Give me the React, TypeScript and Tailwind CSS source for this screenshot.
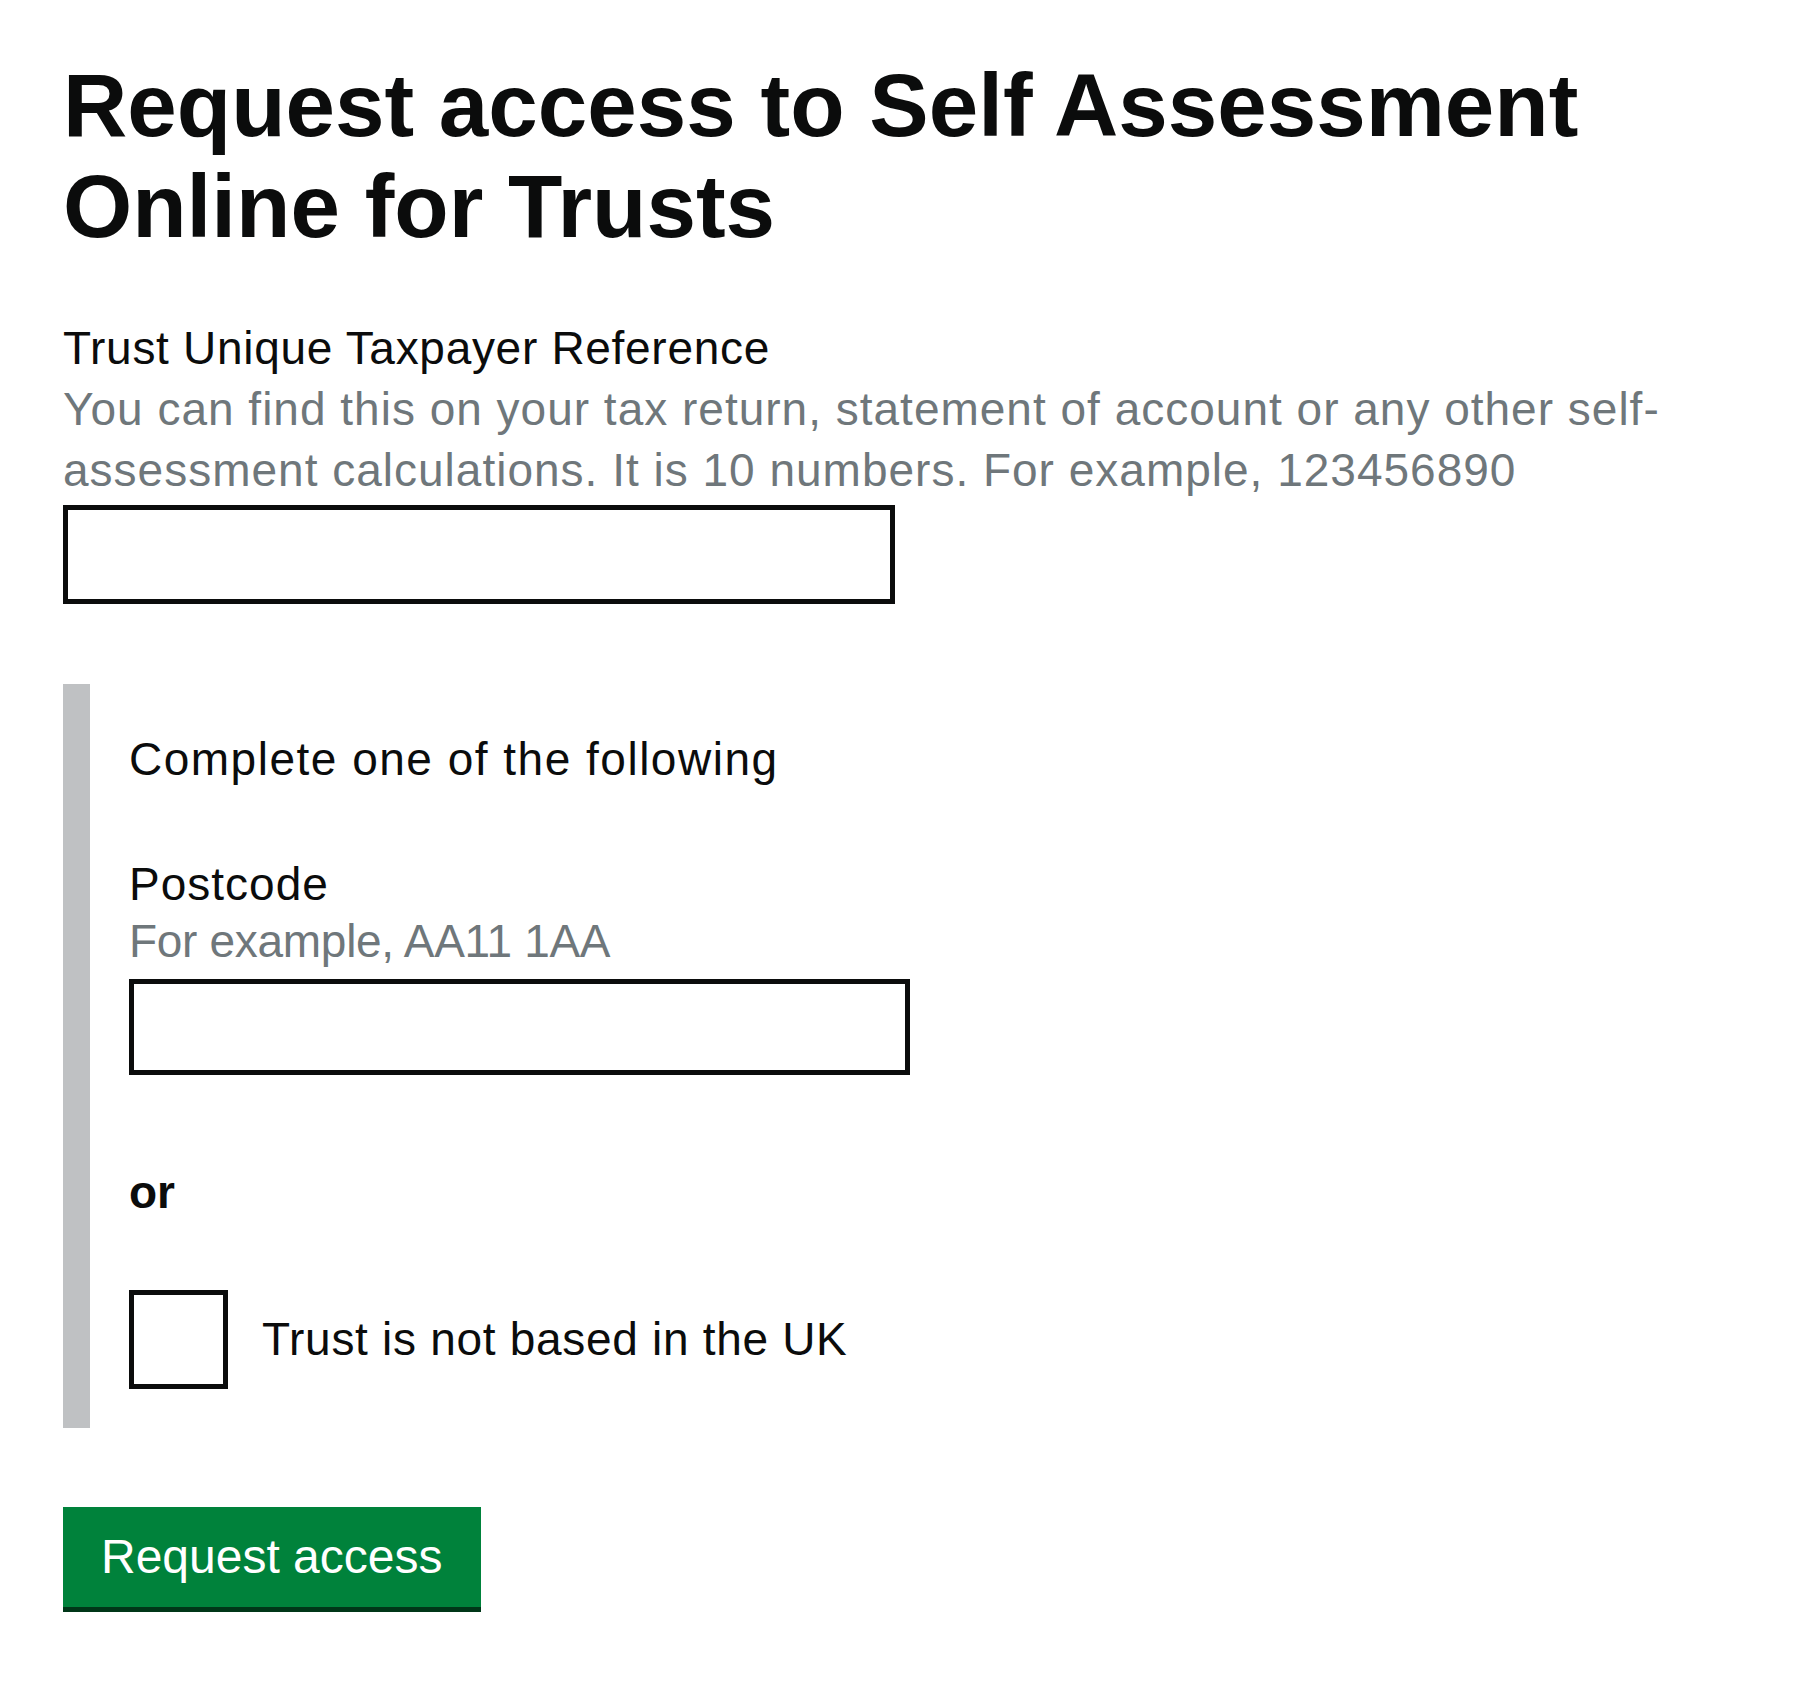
import React from "react"

const font = { fontFamily: '"Liberation Sans", Arial, sans-serif' }

export default function App() {
  return (
    <div className="min-h-screen w-full bg-white text-[#0b0c0c]" style={font}>
      <main className="pl-[63px] pr-[40px] pt-[55px] pb-[80px]">
        <h1 className="text-[89px] leading-[101px] font-bold">
          Request access to Self Assessment
          <br />
          Online for Trusts
        </h1>

        <form className="mt-[61px] tracking-[1px]" onSubmit={(e) => e.preventDefault()}>
          <label htmlFor="utr" className="block text-[46px] leading-[61px] tracking-[0.7px]">
            Trust Unique Taxpayer Reference
          </label>
          <span className="block text-[46px] leading-[61px] text-[#6f777b]">
            You can find this on your tax return, statement of account or any other self-
            <br />
            assessment calculations. It is 10 numbers. For example, 123456890
          </span>
          <input
            id="utr"
            type="text"
            className="mt-[4px] block w-[832px] h-[99px] border-[5px] border-[#0b0c0c] bg-white px-4 text-[46px] outline-none"
          />

          <div className="mt-[80px] border-l-[27px] border-[#bfc1c3] pl-[39px] pt-[45px] pb-[39px]">
            <p className="text-[46px] leading-[61px] tracking-[1.5px]">Complete one of the following</p>

            <label htmlFor="postcode" className="mt-[65px] block text-[46px] leading-[58px]">
              Postcode
            </label>
            <span className="block text-[46px] leading-[56px] text-[#6f777b] tracking-[-0.3px]">
              For example, AA11 1AA
            </span>
            <input
              id="postcode"
              type="text"
              className="mt-[10px] block w-[781px] h-[96px] border-[5px] border-[#0b0c0c] bg-white px-4 text-[46px] outline-none"
            />

            <p className="mt-[87px] text-[46px] leading-[61px] font-bold tracking-normal">or</p>

            <label className="mt-[67px] flex items-center gap-[34px] text-[46px] leading-[61px] tracking-[0.7px]">
              <input
                type="checkbox"
                className="appearance-none w-[99px] h-[99px] border-[5px] border-[#0b0c0c] bg-white shrink-0"
              />
              <span>Trust is not based in the UK</span>
            </label>
          </div>

          <button
            type="submit"
            className="mt-[79px] h-[100px] px-[38px] bg-[#00823b] text-white text-[48px] leading-none tracking-normal shadow-[0_5px_0_#003618]"
          >
            Request access
          </button>
        </form>
      </main>
    </div>
  )
}
